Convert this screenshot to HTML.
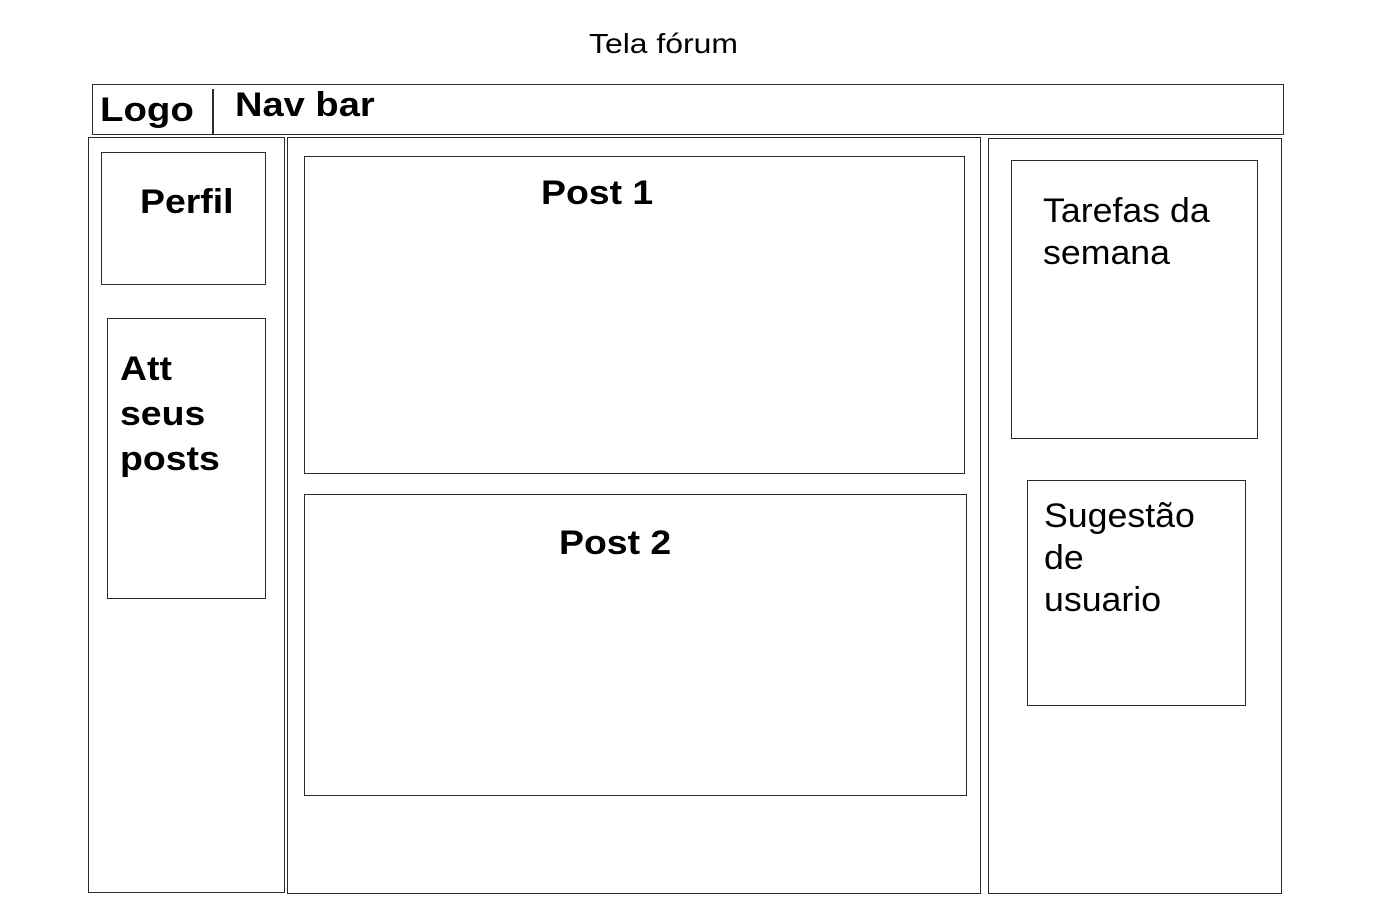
<!DOCTYPE html>
<html><head><meta charset="utf-8"><style>
body{margin:0;width:1375px;height:920px;background:#fff;position:relative;overflow:hidden;font-family:"Liberation Sans",Arial,sans-serif;color:#000}
.b{position:absolute;border:1.5px solid #2a2a2a;box-sizing:border-box}
.t{position:absolute;white-space:nowrap;line-height:1;transform-origin:0 0}
.bold{font-weight:bold;transform:scaleX(1.1)}
.n{transform:scaleX(1.05)}
</style></head><body>
<div class="t" style="left:589px;top:30px;font-size:28px;transform:scaleX(1.14)">Tela fórum</div>
<div class="b" style="left:92px;top:84px;width:1192px;height:51px"></div>
<div style="position:absolute;left:212px;top:89px;width:1.5px;height:45px;background:#2a2a2a"></div>
<div class="t bold" style="left:100px;top:93px;font-size:34px;transform:scaleX(1.13)">Logo</div>
<div class="t bold" style="left:235px;top:88px;font-size:34px;transform:scaleX(1.12)">Nav bar</div>

<div class="b" style="left:88px;top:137px;width:197px;height:756px"></div>
<div class="b" style="left:101px;top:152px;width:165px;height:133px"></div>
<div class="t bold" style="left:140px;top:185px;font-size:34px">Perfil</div>
<div class="b" style="left:107px;top:318px;width:159px;height:281px"></div>
<div class="t bold" style="left:120px;top:347px;font-size:34px;line-height:45px">Att<br>seus<br>posts</div>

<div class="b" style="left:287px;top:137px;width:694px;height:757px"></div>
<div class="b" style="left:304px;top:156px;width:661px;height:318px"></div>
<div class="t bold" style="left:541px;top:176px;font-size:34px">Post 1</div>
<div class="b" style="left:304px;top:494px;width:663px;height:302px"></div>
<div class="t bold" style="left:559px;top:526px;font-size:34px">Post 2</div>

<div class="b" style="left:988px;top:138px;width:294px;height:756px"></div>
<div class="b" style="left:1011px;top:160px;width:247px;height:279px"></div>
<div class="t n" style="left:1043px;top:190px;font-size:34px;line-height:42px">Tarefas da<br>semana</div>
<div class="b" style="left:1027px;top:480px;width:219px;height:226px"></div>
<div class="t n" style="left:1044px;top:495px;font-size:34px;line-height:42px">Sugestão<br>de<br>usuario</div>
</body></html>
